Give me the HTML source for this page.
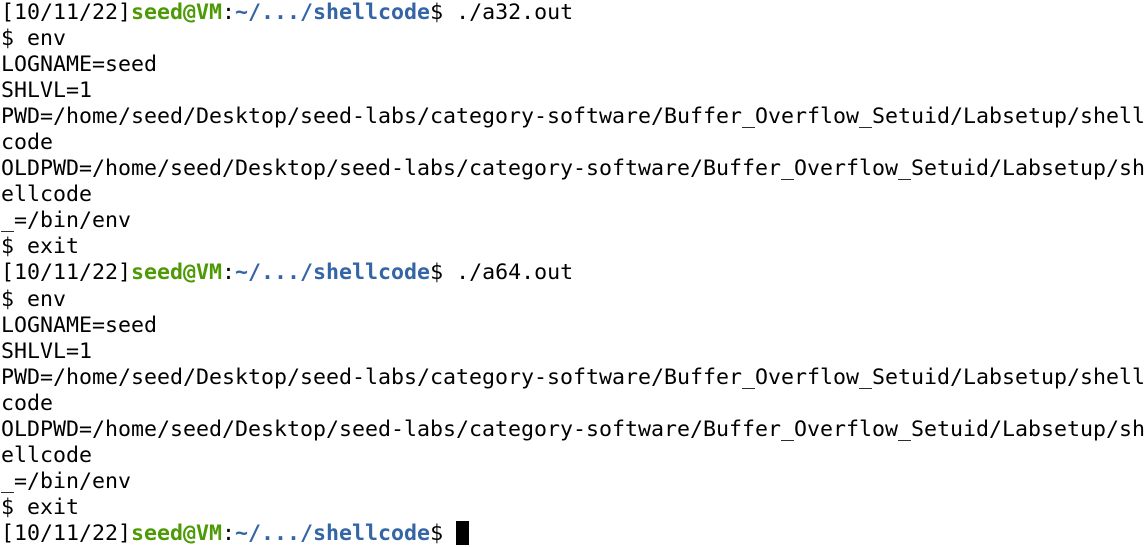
<!DOCTYPE html><html><head><style>
body{margin:0;background:#fff;width:1147px;height:547px;overflow:hidden}
pre{margin:0;padding:0 0 0 1px;font-family:"DejaVu Sans Mono","Liberation Mono",monospace;font-size:21.6px;line-height:26.05px;color:#000}
.g{color:#4e9a06;font-weight:bold}.b{color:#3465a4;font-weight:bold}
.c{display:inline-block;width:13px;height:24px;background:#000;vertical-align:-5px}
</style></head><body><pre>[10/11/22]<span class="g">seed@VM</span>:<span class="b">~/.../shellcode</span>$ ./a32.out
$ env
LOGNAME=seed
SHLVL=1
PWD=/home/seed/Desktop/seed-labs/category-software/Buffer_Overflow_Setuid/Labsetup/shell
code
OLDPWD=/home/seed/Desktop/seed-labs/category-software/Buffer_Overflow_Setuid/Labsetup/sh
ellcode
_=/bin/env
$ exit
[10/11/22]<span class="g">seed@VM</span>:<span class="b">~/.../shellcode</span>$ ./a64.out
$ env
LOGNAME=seed
SHLVL=1
PWD=/home/seed/Desktop/seed-labs/category-software/Buffer_Overflow_Setuid/Labsetup/shell
code
OLDPWD=/home/seed/Desktop/seed-labs/category-software/Buffer_Overflow_Setuid/Labsetup/sh
ellcode
_=/bin/env
$ exit
[10/11/22]<span class="g">seed@VM</span>:<span class="b">~/.../shellcode</span>$ <span class="c"></span></pre></body></html>
